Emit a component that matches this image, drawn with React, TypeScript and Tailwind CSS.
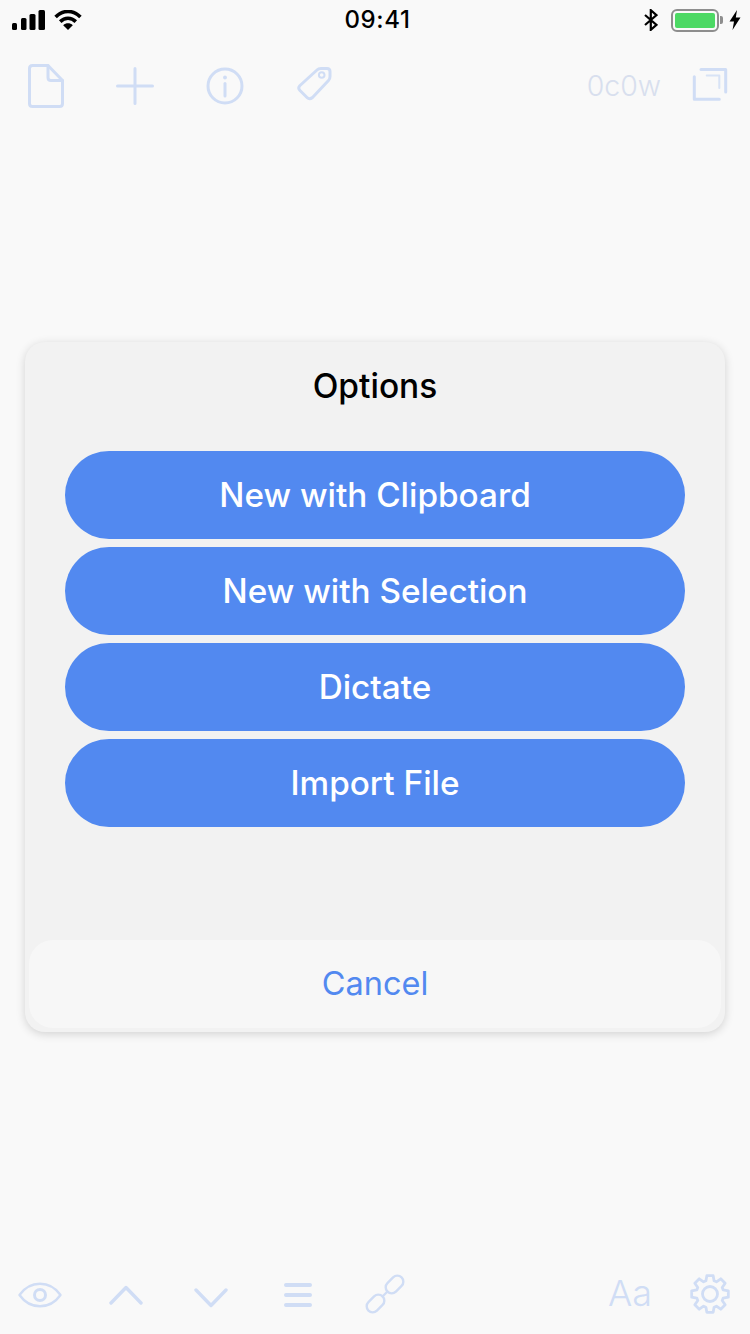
const C = "#d0ddf5";
const font = { fontFamily: "Inter, 'Noto Sans', sans-serif" };

function Sv({ w, h, className, children }: { w: number; h: number; className?: string; children: React.ReactNode }) {
  return (
    <svg width={w} height={h} viewBox={`0 0 ${w} ${h}`} fill="none" stroke={C} strokeWidth={3} strokeLinecap="round" strokeLinejoin="round" className={`shrink-0 ${className ?? ""}`}>
      {children}
    </svg>
  );
}

function gearPath() {
  const cx = 21;
  const cy = 21;
  const R = 18.6;
  const r = 13.8;
  const pts: string[] = [];
  for (let i = 0; i < 8; i++) {
    const a = (i * Math.PI) / 4 - Math.PI / 2;
    const steps: [number, number][] = [
      [r, -0.3],
      [R, -0.17],
      [R, 0.17],
      [r, 0.3],
    ];
    for (const [rad, da] of steps) {
      pts.push(`${(cx + rad * Math.cos(a + da)).toFixed(2)} ${(cy + rad * Math.sin(a + da)).toFixed(2)}`);
    }
  }
  return `M${pts.join(" L")} Z`;
}

function StatusBar() {
  return (
    <div className="relative flex h-[40px] items-center text-black">
      <svg width={33} height={20} viewBox="0 0 33 20" fill="#000" className="ml-[12px]">
        <rect x="0" y="13" width="5" height="7" rx="1.5" />
        <rect x="9" y="8" width="5.5" height="12" rx="1.5" />
        <rect x="17.5" y="4" width="6" height="16" rx="1.5" />
        <rect x="26.5" y="0" width="6.5" height="20" rx="1.5" />
      </svg>
      <svg width={28} height={20} viewBox="0 0 28 20" fill="none" stroke="#000" strokeWidth={3.6} className="ml-[9px]">
        <path d="M1.6 7 C9 -0.4 19 -0.4 26.4 7" />
        <path d="M6.2 11.6 C10.8 7.2 17.2 7.2 21.8 11.6" />
        <path d="M14 20 L9.2 15.2 C12 12.7 16 12.7 18.8 15.2 Z" fill="#000" stroke="none" />
      </svg>
      <span className="flex-1 pl-[29px] text-center text-[24px] font-medium tracking-[0.6px]">09:41</span>
      <svg width={14} height={22} viewBox="0 0 14 22" fill="none" stroke="#000" strokeWidth={2.2}>
        <path d="M1 6 L12.5 15.8 L6.8 20.8 V1.2 L12.5 6.2 L1 16" />
      </svg>
      <div className="ml-[13px] flex items-center">
        <div className="flex h-[23px] w-[48px] items-center justify-center rounded-[6px] border-[2px] border-[#8e8e8e]">
          <div className="h-[15px] w-[40px] rounded-[2px] bg-[#4cd964]" />
        </div>
        <div className="ml-[1px] h-[8px] w-[3px] rounded-r-[2px] bg-[#8e8e8e]" />
      </div>
      <svg width={12} height={20} viewBox="0 0 12 20" fill="#000" className="ml-[6px] mr-[9px]">
        <path d="M8 0 L0.5 11.5 H5 L3.5 20 L11.5 7.5 H6.8 Z" />
      </svg>
    </div>
  );
}

function TopBar() {
  return (
    <div className="flex h-[92px] items-center">
      <Sv w={36} h={44} className="ml-[28px]">
        <path d="M1.5 4.5 Q1.5 1.5 4.5 1.5 H20 L34.5 16.5 V39.5 Q34.5 42.5 31.5 42.5 H4.5 Q1.5 42.5 1.5 39.5 Z" />
        <path d="M20 1.5 V13.5 Q20 16.5 23 16.5 H34.5" />
      </Sv>
      <Sv w={38} h={38} className="ml-[52px]">
        <path d="M19 1.5 V36.5 M1.5 19 H36.5" />
      </Sv>
      <Sv w={38} h={38} className="ml-[52px]">
        <circle cx="19" cy="19" r="17" />
        <path d="M19 16.5 V29" />
        <circle cx="19" cy="10.5" r="1.2" fill={C} strokeWidth={1.5} />
      </Sv>
      <Sv w={38} h={38} className="ml-[52px] mt-[-2px]">
        <path d="M21 4 Q22.500 2.500 25 2.500 H31 Q34 2.500 34 5.500 V10.500 Q34 13 32.500 14.500 L16.500 31.500 Q13.500 34 11 31.500 L4 24.500 Q1.500 22 4 19.500 Z" />
        <circle cx="25.700" cy="9" r="2.800" strokeWidth={2} />
      </Sv>
      <span className="ml-auto text-[28.500px] font-light leading-none text-[#d8dfee]">0c0w</span>
      <Sv w={36} h={36} className="ml-[31px] mr-[22px]">
        <path d="M9 1.500 H33.700 V24" />
        <path d="M14.700 7.500 H27.300 V20" strokeWidth={2} opacity={0.8} />
        <path d="M2.300 8.700 V31.300 H27.300" />
      </Sv>
    </div>
  );
}

function BottomBar() {
  return (
    <div className="flex h-[78px] items-center">
      <Sv w={44} h={28} className="ml-[18px]">
        <path d="M1.500 14 C12 -1 32 -1 42.500 14 C32 29 12 29 1.500 14 Z" strokeWidth={2.400} />
        <circle cx="22" cy="14" r="5.500" />
      </Sv>
      <Sv w={34} h={20} className="ml-[47px]">
        <path d="M2 18 L17 2.500 L32 18" strokeWidth={3.400} />
      </Sv>
      <Sv w={34} h={20} className="ml-[51px] mt-[6px]">
        <path d="M2 2 L17 17.500 L32 2" strokeWidth={3.400} />
      </Sv>
      <Sv w={28} h={26} className="ml-[56px]">
        <path d="M2 3 H26 M2 13 H26 M2 23 H26" strokeWidth={4} />
      </Sv>
      <Sv w={40} h={40} className="ml-[53px] mt-[-2px]">
        <rect x="-10" y="-6" width="20" height="12" rx="6" transform="translate(10.500 29.500) rotate(-45)" strokeWidth={2.400} />
        <rect x="-10" y="-6" width="20" height="12" rx="6" transform="translate(29.500 10.500) rotate(-45)" strokeWidth={2.400} />
        <path d="M17.500 22.500 L22.500 17.500" strokeWidth={2.400} />
      </Sv>
      <span className="ml-auto mt-[-4px] text-[36px] font-light leading-none text-[#d0ddf5]">Aa</span>
      <Sv w={42} h={42} className="ml-[37px] mr-[19px] mt-[-2px]">
        <path d={gearPath()} strokeWidth={2.800} />
        <circle cx="21" cy="21" r="7.500" strokeWidth={2.800} />
      </Sv>
    </div>
  );
}

const actions = ["New with Clipboard", "New with Selection", "Dictate", "Import File"];

export default function App() {
  return (
    <div className="flex h-[1334px] w-[750px] flex-col overflow-hidden bg-[#f9f9f9]" style={font}>
      <StatusBar />
      <TopBar />
      <div className="mx-[25px] mt-[210px] flex h-[690px] flex-col rounded-[20px] bg-[#f2f2f2] px-[4px] pb-[4px] shadow-[0_2px_10px_rgba(0,0,0,0.16)]">
        <h1 className="flex h-[88px] items-center justify-center pt-[1px] text-[33.500px] font-medium text-black">Options</h1>
        <div className="mx-[36px] mt-[21px] flex flex-col gap-[8px]">
          {actions.map((a) => (
            <button key={a} className="flex h-[88px] items-center justify-center rounded-[44px] bg-[#5289f0] pt-[1px] text-[33.300px] font-medium text-white">
              {a}
            </button>
          ))}
        </div>
        <button className="mt-[113px] flex h-[88px] items-center justify-center rounded-[24px] bg-[#f7f7f7] pt-[1px] text-[32.500px] text-[#5289f0]">
          Cancel
        </button>
      </div>
      <div className="flex-1" />
      <BottomBar />
    </div>
  );
}
